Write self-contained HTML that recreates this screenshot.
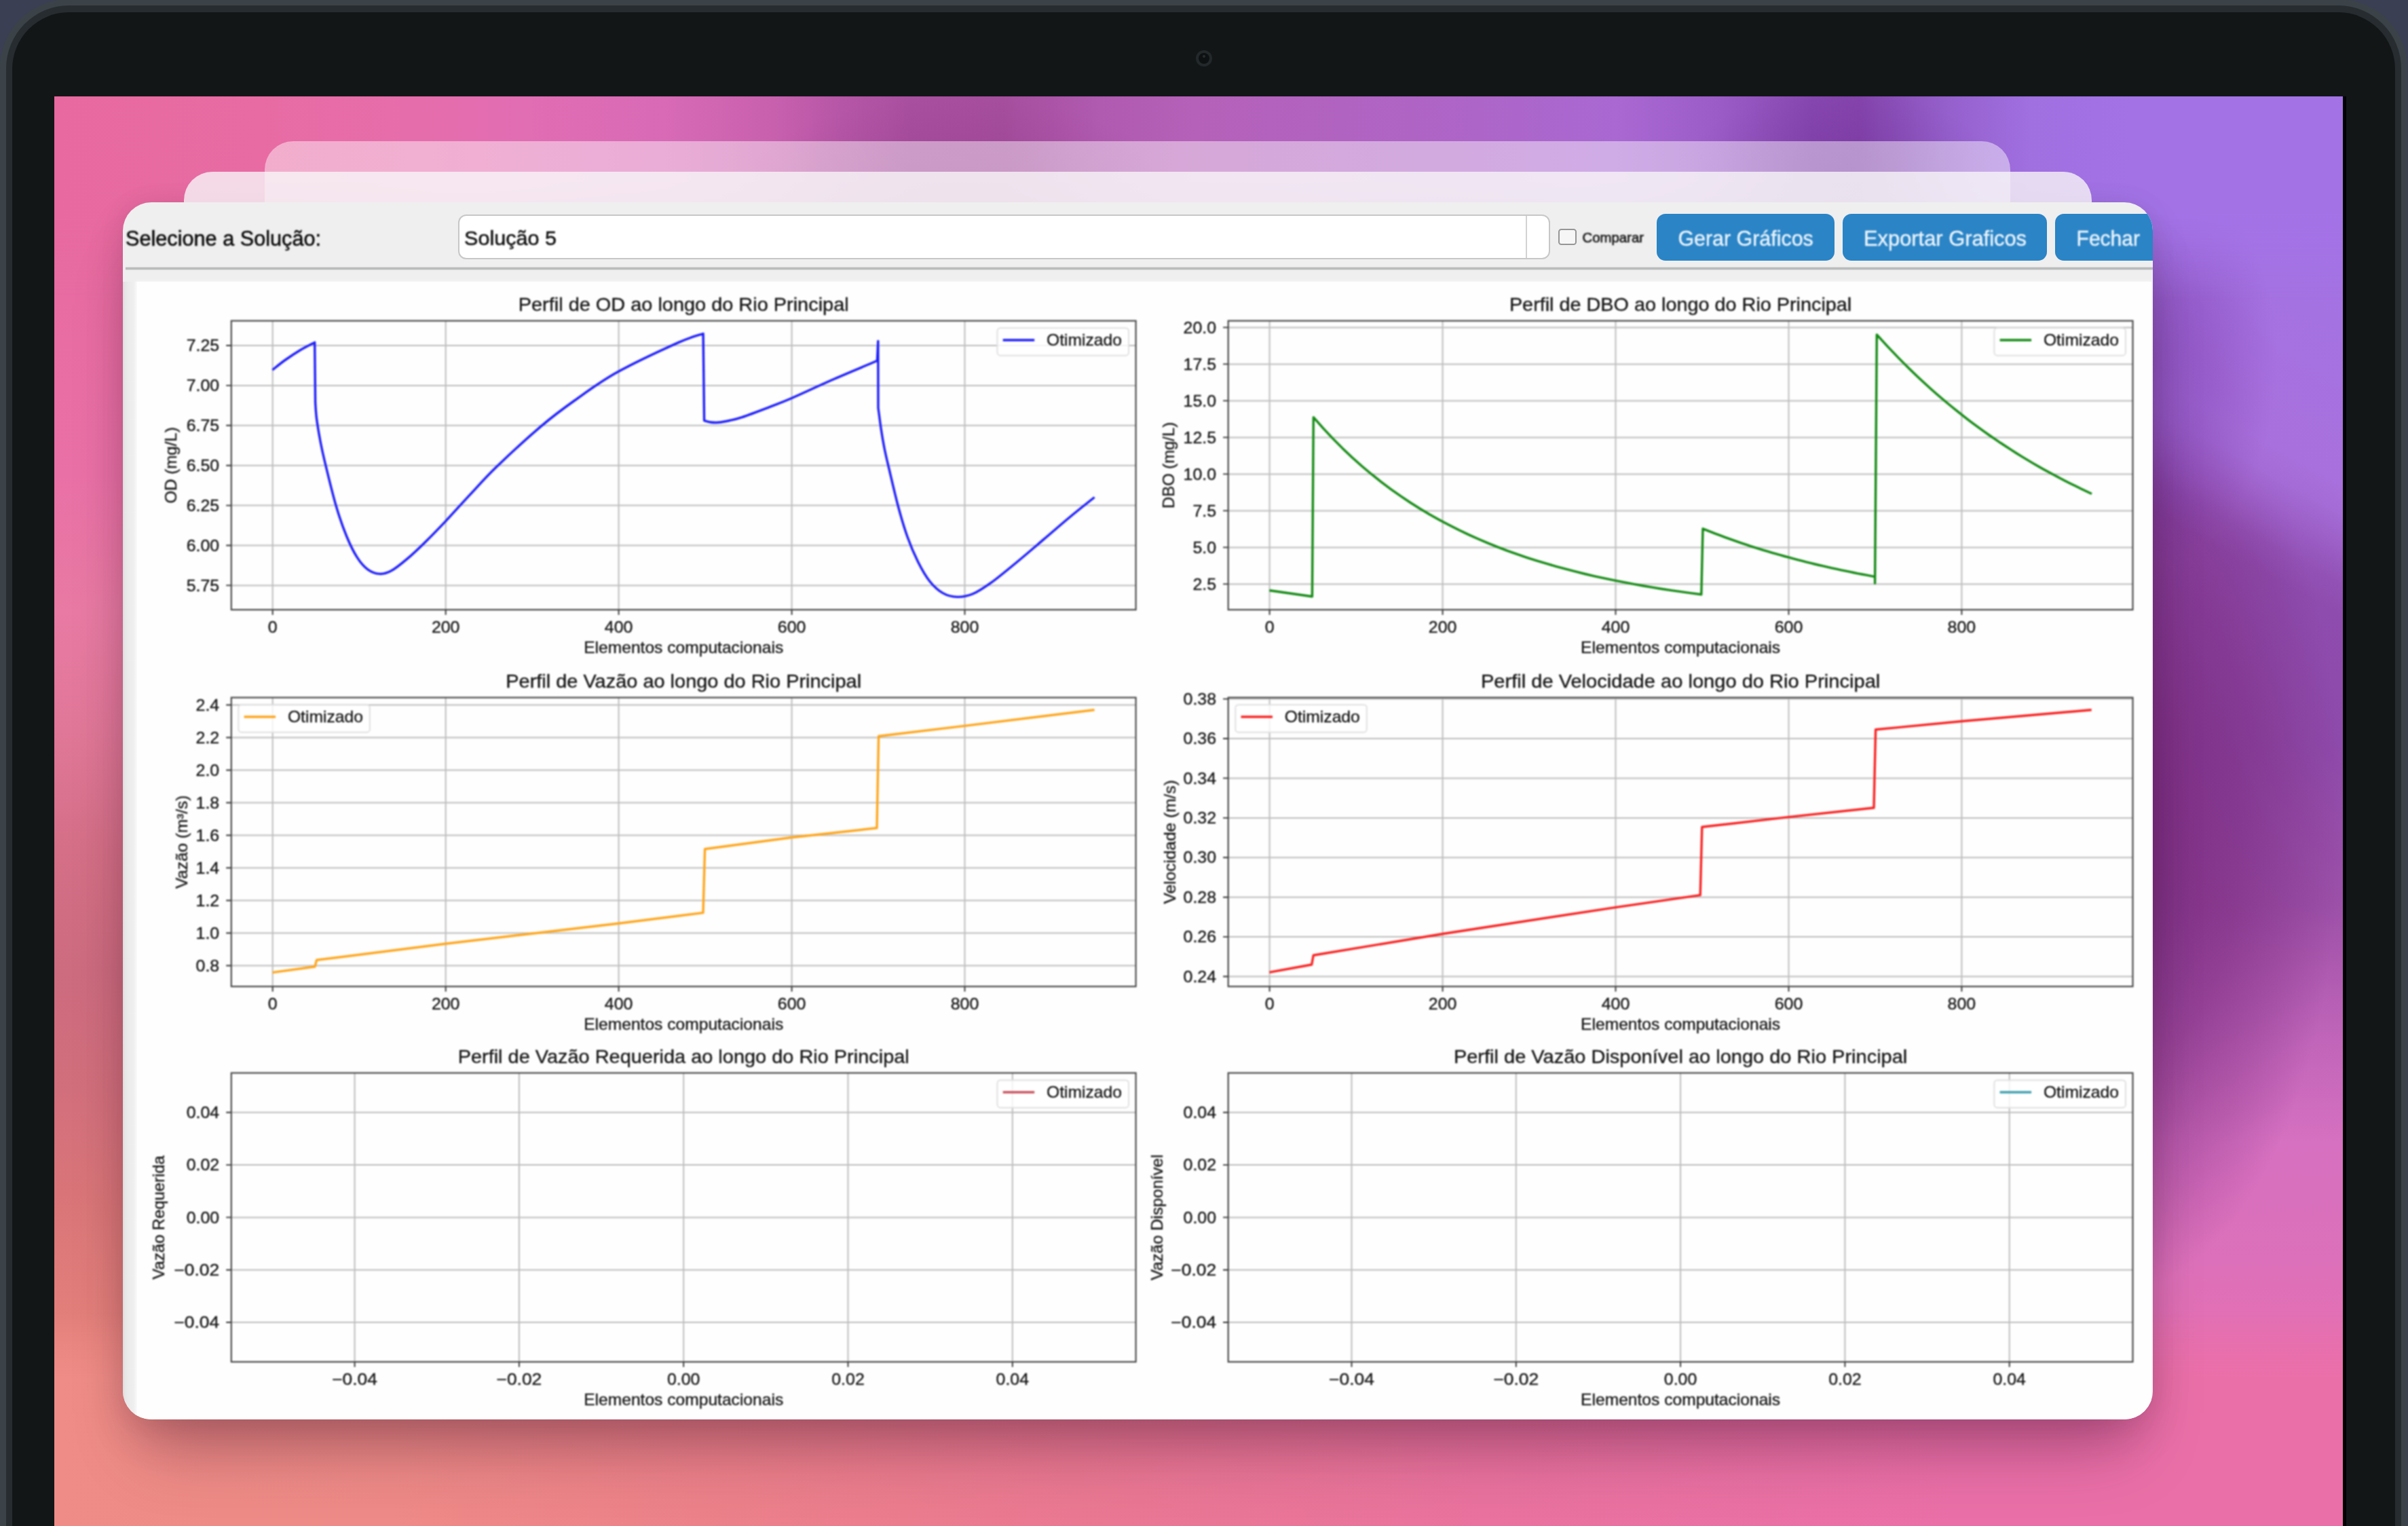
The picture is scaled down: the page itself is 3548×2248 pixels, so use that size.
<!DOCTYPE html>
<html><head><meta charset="utf-8"><title>Perfis</title>
<style>
html,body{margin:0;padding:0}
body{width:3548px;height:2248px;overflow:hidden;position:relative;background:#3a3f53;font-family:"Liberation Sans",sans-serif}
.abs{position:absolute}
#f1{left:0;top:-1px;width:3547px;height:2500px;border-radius:101px;background:#3b4348}
#f2{left:8.6px;top:8.4px;width:3529.6px;height:2500px;border-radius:93px;background:#272c30}
#f3{left:17.5px;top:17.7px;width:3511.3px;height:2500px;border-radius:84px;background:#121617}
#blk{left:3452px;top:141.5px;width:4.6px;height:2200px;background:#020004}
#cam{left:1762px;top:74px;width:16px;height:16px;border:4px solid #23292b;border-radius:50%;background:#0e1112}
#cam i{position:absolute;left:6.3px;top:3.3px;width:3.4px;height:3.4px;border-radius:50%;background:#262c2e}
#screen{left:79.7px;top:141.5px;width:3372.3px;height:2106.5px;overflow:hidden;background:#e86ca2}
/* wallpaper strips (coordinates local to #screen) */
#wl{left:0;top:0;width:400px;height:2107px;background:linear-gradient(180deg,#e7699f 0,#e86ca2 300px,#e970a6 560px,#e87aa3 760px,#e07798 935px,#d46f87 1110px,#cd6b7f 1290px,#d26f7c 1465px,#da7678 1640px,#e4807b 1820px,#eb8882 1950px,#ef8d87 2085px)}
#wr{left:2900px;top:0;width:472px;height:2107px;background:radial-gradient(ellipse 190px 300px at 185px 390px,rgba(105,40,150,.42) 0,rgba(105,40,150,.25) 50%,rgba(105,40,150,0) 100%),linear-gradient(209deg,#a373e6 0,#a572e2 300px,#a870dc 500px,rgba(168,112,220,.85) 540px,rgba(168,112,220,.5) 585px,rgba(168,112,220,.15) 630px,rgba(168,112,220,0) 670px),radial-gradient(ellipse 330px 700px at 140px 1060px,rgba(124,44,128,1) 0,rgba(124,44,128,.9) 18%,rgba(124,44,128,.6) 55%,rgba(124,44,128,.28) 80%,rgba(124,44,128,0) 100%),linear-gradient(180deg,#9250b4 0,#8e4cae 760px,#8e4aaa 958px,#9c50a8 1190px,#c266ba 1400px,#d670c0 1540px,#dc70ba 1710px,#e670b2 1860px,#ea70aa 2070px,#ea6fa8 2107px)}
#wt{left:0;top:0;width:3372px;height:300px;background:radial-gradient(ellipse 230px 120px at 2630px 110px,rgba(100,35,140,.28) 0,rgba(100,35,140,0) 100%),radial-gradient(ellipse 330px 150px at 1330px 150px,rgba(120,30,110,.22) 0,rgba(120,30,110,0) 100%),linear-gradient(90deg,#e7699f 0,#e86ba3 300px,#e66dab 520px,#e16db3 700px,#d86ab6 900px,#c860ae 1060px,#b656a6 1160px,#a94fa0 1260px,#a64e9e 1400px,#b05ab0 1540px,#b561b9 1680px,#b163c1 1900px,#ad65c8 2100px,#a968d2 2300px,#9c5cc8 2450px,#8747b0 2590px,#8444ac 2660px,#9560cc 2790px,#a06fe0 2910px,#a373e6 3060px,#a373e6 3372px);-webkit-mask-image:linear-gradient(180deg,#000 0,#000 170px,transparent 300px);mask-image:linear-gradient(180deg,#000 0,#000 170px,transparent 300px)}
#wb{left:0;top:1790px;width:3372px;height:317px;background:linear-gradient(90deg,#ef8c87 0,#ee8a87 500px,#ec808a 1000px,#ea7892 1500px,#e9729e 2100px,#ea6fa8 2800px,#ea6fa9 3372px);-webkit-mask-image:linear-gradient(180deg,transparent 0,#000 100px);mask-image:linear-gradient(180deg,transparent 0,#000 100px)}
.bw{border-radius:42px 42px 0 0;filter:blur(.6px)}
#w3{left:390px;top:208px;width:2572px;height:120px;background:rgba(255,255,255,.45)}
#w2{left:271px;top:253px;width:2811px;height:100px;background:rgba(247,245,247,.8)}
#win{left:181px;top:297.5px;width:2991px;height:1793px;border-radius:42px;background:#efefef;overflow:hidden;filter:blur(.7px)}
#shadow{left:181px;top:297.5px;width:2991px;height:1793px;border-radius:42px;box-shadow:0 70px 100px -30px rgba(40,0,30,.28),0 25px 60px rgba(40,0,30,.12),0 0 40px rgba(40,0,30,.06)}
#sep{left:4px;top:96px;width:2991px;height:3px;background:#b9bcbc;box-shadow:0 1px 1px #d9dada,0 -1px 1px #dcdcdc}
#canvas{left:20.5px;top:117px;width:2968px;height:1700px;background:#fefefe;box-shadow:0 0 4px 1px #f6f6f6}
#lstrip{left:0;top:117px;width:21px;height:1700px;background:linear-gradient(90deg,#d9dbdb 0,#e5e6e6 3px,#ebebeb 8px,#efefef 16px,#f8f8f8 20px,#fefefe 22px)}
#combo{left:493.5px;top:18.5px;width:1605px;height:62px;border:2.5px solid #c7c7c7;border-radius:12px;background:#fff}
#combo i{position:absolute;right:32px;top:0;width:2px;height:62px;background:#d2d2d2}
#chk{left:2114.5px;top:39px;width:23px;height:20px;border:2.5px solid #969696;border-radius:4.5px;background:#f6f6f6}
.btn{top:17px;height:69px;border-radius:13px;background:#2a84c6}
#svg{left:0;top:0;filter:blur(.95px)}
</style></head>
<body>
<div id="f1" class="abs"></div><div id="f2" class="abs"></div><div id="f3" class="abs"></div>
<div id="cam" class="abs"><i></i></div>
<div id="blk" class="abs"></div>
<div id="screen" class="abs">
  <div id="wl" class="abs"></div><div id="wr" class="abs"></div><div id="wt" class="abs"></div><div id="wb" class="abs"></div>
</div>
<div id="shadow" class="abs"></div>
<div id="w3" class="abs bw"></div>
<div id="w2" class="abs bw"></div>
<div id="win" class="abs">
  <div id="sep" class="abs"></div>
  <div id="canvas" class="abs"></div>
  <div id="lstrip" class="abs"></div>
  <div id="combo" class="abs"><i></i></div>
  <div id="chk" class="abs"></div>
  <div class="abs btn" style="left:2259.5px;width:262.5px"></div>
  <div class="abs btn" style="left:2534px;width:301px"></div>
  <div class="abs btn" style="left:2846.7px;width:200px"></div>
</div>
<svg id="svg" class="abs" width="3548" height="2248" viewBox="0 0 3548 2248" font-family="Liberation Sans, sans-serif">
<g id="tb">
<text x="185" y="362" font-size="30.7" fill="#0a0a0a" stroke="#0a0a0a" stroke-width=".55" textLength="288" lengthAdjust="spacingAndGlyphs">Selecione a Solução:</text>
<text x="684" y="361" font-size="30.4" fill="#101010" stroke="#101010" stroke-width=".55" textLength="136" lengthAdjust="spacingAndGlyphs">Solução 5</text>
<text x="2331.5" y="357" font-size="20.6" fill="#1c1c1c" stroke="#1c1c1c" stroke-width=".7" textLength="90.5" lengthAdjust="spacingAndGlyphs">Comparar</text>
<text x="2472.4" y="362" font-size="32" fill="#eef6fc" stroke="#eef6fc" stroke-width=".4" textLength="199.4" lengthAdjust="spacingAndGlyphs">Gerar Gráficos</text>
<text x="2746" y="362" font-size="32" fill="#eef6fc" stroke="#eef6fc" stroke-width=".4" textLength="240" lengthAdjust="spacingAndGlyphs">Exportar Graficos</text>
<text x="3059.6" y="362" font-size="32" fill="#eef6fc" stroke="#eef6fc" stroke-width=".4" textLength="93.4" lengthAdjust="spacingAndGlyphs">Fechar</text>
</g>
<g id="charts">
<path d="M401.7,472.6V898.2M656.7,472.6V898.2M911.6,472.6V898.2M1166.6,472.6V898.2M1421.5,472.6V898.2M340.8,509.0H1673.6M340.8,567.9H1673.6M340.8,626.8H1673.6M340.8,685.7H1673.6M340.8,744.6H1673.6M340.8,803.5H1673.6M340.8,862.4H1673.6" stroke="#bdbdbd" stroke-width="2" fill="none"/>
<path d="M401.4,545.0C404.5,542.6 413.2,535.3 420.0,530.5C426.8,525.7 434.7,520.4 442.0,516.0C449.3,511.6 460.1,506.3 463.7,504.4L464.6,593.0C464.9,596.9 465.3,607.0 466.5,616.5C467.7,626.0 469.8,638.4 472.0,650.0C474.2,661.6 476.1,670.1 480.0,686.1C483.9,702.1 490.2,728.6 495.4,746.0C500.5,763.4 505.7,777.9 510.9,790.5C516.1,803.1 521.2,813.4 526.4,821.4C531.5,829.4 536.3,834.8 541.8,838.8C547.3,842.8 553.4,845.1 559.2,845.4C565.0,845.7 569.8,844.5 576.6,840.8C583.4,837.1 591.4,830.5 599.8,823.4C608.2,816.3 617.4,807.6 626.9,798.2C636.4,788.9 646.0,778.9 657.0,767.3C668.0,755.7 680.2,741.8 692.6,728.6C705.0,715.4 713.9,704.8 731.3,688.0C748.7,671.2 777.7,644.5 797.0,628.1C816.3,611.7 828.5,602.8 847.3,589.5C866.1,576.2 884.4,562.3 909.9,548.1C935.4,533.9 979.0,513.8 1000.0,504.4C1021.0,495.0 1030.1,493.7 1036.1,491.6L1037.6,619.6C1039.2,620.0 1043.5,621.5 1047.0,622.0C1050.5,622.5 1053.8,622.7 1058.5,622.3C1063.2,621.9 1069.2,620.8 1075.0,619.5C1080.8,618.2 1083.8,617.8 1093.3,614.6C1102.8,611.4 1119.9,604.9 1132.0,600.3C1144.1,595.6 1149.9,593.7 1166.0,586.7C1182.1,579.7 1207.5,567.7 1228.6,558.5C1249.7,549.3 1281.8,536.0 1292.4,531.5L1293.8,502.5L1294.0,601.0C1294.7,606.2 1296.7,622.2 1298.2,632.0C1299.7,641.8 1301.1,650.3 1303.0,660.0C1304.9,669.7 1306.4,675.7 1309.8,690.0C1313.2,704.3 1318.9,729.2 1323.4,746.0C1327.9,762.8 1332.1,777.0 1336.9,790.5C1341.7,804.0 1346.9,816.2 1352.4,827.2C1357.9,838.2 1363.7,848.5 1369.8,856.2C1375.9,863.9 1382.3,869.7 1389.1,873.6C1395.9,877.5 1403.0,879.2 1410.4,879.4C1417.8,879.6 1425.2,878.3 1433.6,874.8C1442.0,871.3 1449.6,866.1 1460.6,858.2C1471.5,850.3 1486.4,837.8 1499.3,827.2C1512.2,816.6 1525.1,805.4 1538.0,794.4C1550.9,783.4 1564.2,771.8 1576.6,761.5C1589.0,751.2 1606.6,737.3 1612.6,732.5" stroke="#1c1cfa" stroke-width="3.4" fill="none" stroke-linejoin="round" stroke-linecap="butt"/>
<path d="M401.7,898.2v7.6M656.7,898.2v7.6M911.6,898.2v7.6M1166.6,898.2v7.6M1421.5,898.2v7.6M340.8,509.0h-7.6M340.8,567.9h-7.6M340.8,626.8h-7.6M340.8,685.7h-7.6M340.8,744.6h-7.6M340.8,803.5h-7.6M340.8,862.4h-7.6" stroke="#333" stroke-width="1.9" fill="none"/>
<rect x="340.8" y="472.6" width="1332.8" height="425.6" fill="none" stroke="#424242" stroke-width="2.1"/>
<text x="401.7" y="931.8" font-size="23.2" text-anchor="middle" textLength="13.9" lengthAdjust="spacingAndGlyphs" fill="#161616" stroke="#161616" stroke-width=".35">0</text>
<text x="656.7" y="931.8" font-size="23.2" text-anchor="middle" textLength="41.6" lengthAdjust="spacingAndGlyphs" fill="#161616" stroke="#161616" stroke-width=".35">200</text>
<text x="911.6" y="931.8" font-size="23.2" text-anchor="middle" textLength="41.6" lengthAdjust="spacingAndGlyphs" fill="#161616" stroke="#161616" stroke-width=".35">400</text>
<text x="1166.6" y="931.8" font-size="23.2" text-anchor="middle" textLength="41.6" lengthAdjust="spacingAndGlyphs" fill="#161616" stroke="#161616" stroke-width=".35">600</text>
<text x="1421.5" y="931.8" font-size="23.2" text-anchor="middle" textLength="41.6" lengthAdjust="spacingAndGlyphs" fill="#161616" stroke="#161616" stroke-width=".35">800</text>
<text x="323.2" y="517.1" font-size="23.2" text-anchor="end" textLength="48.5" lengthAdjust="spacingAndGlyphs" fill="#161616" stroke="#161616" stroke-width=".35">7.25</text>
<text x="323.2" y="576.0" font-size="23.2" text-anchor="end" textLength="48.5" lengthAdjust="spacingAndGlyphs" fill="#161616" stroke="#161616" stroke-width=".35">7.00</text>
<text x="323.2" y="634.9" font-size="23.2" text-anchor="end" textLength="48.5" lengthAdjust="spacingAndGlyphs" fill="#161616" stroke="#161616" stroke-width=".35">6.75</text>
<text x="323.2" y="693.8" font-size="23.2" text-anchor="end" textLength="48.5" lengthAdjust="spacingAndGlyphs" fill="#161616" stroke="#161616" stroke-width=".35">6.50</text>
<text x="323.2" y="752.7" font-size="23.2" text-anchor="end" textLength="48.5" lengthAdjust="spacingAndGlyphs" fill="#161616" stroke="#161616" stroke-width=".35">6.25</text>
<text x="323.2" y="811.6" font-size="23.2" text-anchor="end" textLength="48.5" lengthAdjust="spacingAndGlyphs" fill="#161616" stroke="#161616" stroke-width=".35">6.00</text>
<text x="323.2" y="870.5" font-size="23.2" text-anchor="end" textLength="48.5" lengthAdjust="spacingAndGlyphs" fill="#161616" stroke="#161616" stroke-width=".35">5.75</text>
<text x="1007.2" y="962.0" font-size="23.2" text-anchor="middle" textLength="294.0" lengthAdjust="spacingAndGlyphs" fill="#161616" stroke="#161616" stroke-width=".35">Elementos computacionais</text>
<text x="259.9" y="685.4" font-size="23.2" text-anchor="middle" textLength="112.4" lengthAdjust="spacingAndGlyphs" fill="#161616" stroke="#161616" stroke-width=".35" transform="rotate(-90 259.9 685.4)">OD (mg/L)</text>
<text x="1007.2" y="457.6" font-size="27.8" text-anchor="middle" textLength="486.9" lengthAdjust="spacingAndGlyphs" fill="#161616" stroke="#161616" stroke-width=".35">Perfil de OD ao longo do Rio Principal</text>
<rect x="1469.5" y="483.2" width="193.5" height="40.5" rx="4.5" fill="#fff" fill-opacity="0.8" stroke="#e0e0e0" stroke-width="2"/>
<path d="M1477.7,501.0h46.5" stroke="#1c1cfa" stroke-width="3.6"/>
<text x="1542.0" y="508.5" font-size="23.2" text-anchor="start" textLength="111.0" lengthAdjust="spacingAndGlyphs" fill="#161616" stroke="#161616" stroke-width=".35">Otimizado</text>
<path d="M1870.6,472.6V898.2M2125.6,472.6V898.2M2380.5,472.6V898.2M2635.5,472.6V898.2M2890.4,472.6V898.2M1809.7,482.4H3142.5M1809.7,536.4H3142.5M1809.7,590.4H3142.5M1809.7,644.4H3142.5M1809.7,698.4H3142.5M1809.7,752.4H3142.5M1809.7,806.4H3142.5M1809.7,860.4H3142.5" stroke="#bdbdbd" stroke-width="2" fill="none"/>
<path d="M1870.3,869.8L1933.4,878.7L1935.3,614.7L1949.6,630.9L1963.9,646.1L1978.1,660.4L1992.4,673.9L2006.7,686.7L2021.0,698.7L2035.3,710.1L2049.6,720.8L2063.9,730.9L2078.2,740.5L2092.5,749.5L2106.7,758.0L2121.0,766.0L2135.3,773.6L2149.6,780.8L2163.9,787.6L2178.2,794.0L2192.5,800.1L2206.8,805.8L2221.0,811.3L2235.3,816.4L2249.6,821.3L2263.9,825.9L2278.2,830.2L2292.5,834.3L2306.8,838.2L2321.1,841.9L2335.4,845.5L2349.6,848.8L2363.9,851.9L2378.2,854.9L2392.5,857.7L2406.8,860.4L2421.1,863.0L2435.4,865.4L2449.7,867.7L2463.9,869.9L2478.2,871.9L2492.5,873.9L2506.8,875.7L2509.0,778.8L2515.3,781.4L2521.7,783.9L2528.0,786.3L2534.3,788.7L2540.7,791.1L2547.0,793.4L2553.4,795.7L2559.7,797.9L2566.1,800.1L2572.4,802.2L2578.7,804.3L2585.1,806.3L2591.4,808.3L2597.8,810.3L2604.1,812.2L2610.4,814.1L2616.8,815.9L2623.1,817.7L2629.5,819.5L2635.8,821.2L2642.2,822.9L2648.5,824.6L2654.8,826.2L2661.2,827.9L2667.5,829.4L2673.9,831.0L2680.2,832.5L2686.5,833.9L2692.9,835.4L2699.2,836.8L2705.6,838.2L2711.9,839.6L2718.3,840.9L2724.6,842.2L2730.9,843.5L2737.3,844.8L2743.6,846.0L2750.0,847.2L2756.3,848.4L2762.6,849.6L2762.6,859.3L2765.3,493.0L2773.2,501.7L2781.2,510.3L2789.1,518.7L2797.0,526.9L2804.9,534.9L2812.8,542.8L2820.8,550.5L2828.7,557.9L2836.6,565.3L2844.5,572.4L2852.4,579.4L2860.3,586.3L2868.3,593.0L2876.2,599.5L2884.1,605.9L2892.0,612.2L2899.9,618.3L2907.9,624.3L2915.8,630.1L2923.7,635.9L2931.6,641.5L2939.5,646.9L2947.4,652.3L2955.4,657.5L2963.3,662.7L2971.2,667.7L2979.1,672.6L2987.0,677.4L2994.9,682.1L3002.9,686.7L3010.8,691.2L3018.7,695.5L3026.6,699.8L3034.5,704.1L3042.5,708.2L3050.4,712.2L3058.3,716.1L3066.2,720.0L3074.1,723.8L3082.0,727.5" stroke="#128a12" stroke-width="3.4" fill="none" stroke-linejoin="round" stroke-linecap="butt"/>
<path d="M1870.6,898.2v7.6M2125.6,898.2v7.6M2380.5,898.2v7.6M2635.5,898.2v7.6M2890.4,898.2v7.6M1809.7,482.4h-7.6M1809.7,536.4h-7.6M1809.7,590.4h-7.6M1809.7,644.4h-7.6M1809.7,698.4h-7.6M1809.7,752.4h-7.6M1809.7,806.4h-7.6M1809.7,860.4h-7.6" stroke="#333" stroke-width="1.9" fill="none"/>
<rect x="1809.7" y="472.6" width="1332.8" height="425.6" fill="none" stroke="#424242" stroke-width="2.1"/>
<text x="1870.6" y="931.8" font-size="23.2" text-anchor="middle" textLength="13.9" lengthAdjust="spacingAndGlyphs" fill="#161616" stroke="#161616" stroke-width=".35">0</text>
<text x="2125.6" y="931.8" font-size="23.2" text-anchor="middle" textLength="41.6" lengthAdjust="spacingAndGlyphs" fill="#161616" stroke="#161616" stroke-width=".35">200</text>
<text x="2380.5" y="931.8" font-size="23.2" text-anchor="middle" textLength="41.6" lengthAdjust="spacingAndGlyphs" fill="#161616" stroke="#161616" stroke-width=".35">400</text>
<text x="2635.5" y="931.8" font-size="23.2" text-anchor="middle" textLength="41.6" lengthAdjust="spacingAndGlyphs" fill="#161616" stroke="#161616" stroke-width=".35">600</text>
<text x="2890.4" y="931.8" font-size="23.2" text-anchor="middle" textLength="41.6" lengthAdjust="spacingAndGlyphs" fill="#161616" stroke="#161616" stroke-width=".35">800</text>
<text x="1792.1" y="490.5" font-size="23.2" text-anchor="end" textLength="48.5" lengthAdjust="spacingAndGlyphs" fill="#161616" stroke="#161616" stroke-width=".35">20.0</text>
<text x="1792.1" y="544.5" font-size="23.2" text-anchor="end" textLength="48.5" lengthAdjust="spacingAndGlyphs" fill="#161616" stroke="#161616" stroke-width=".35">17.5</text>
<text x="1792.1" y="598.5" font-size="23.2" text-anchor="end" textLength="48.5" lengthAdjust="spacingAndGlyphs" fill="#161616" stroke="#161616" stroke-width=".35">15.0</text>
<text x="1792.1" y="652.5" font-size="23.2" text-anchor="end" textLength="48.5" lengthAdjust="spacingAndGlyphs" fill="#161616" stroke="#161616" stroke-width=".35">12.5</text>
<text x="1792.1" y="706.5" font-size="23.2" text-anchor="end" textLength="48.5" lengthAdjust="spacingAndGlyphs" fill="#161616" stroke="#161616" stroke-width=".35">10.0</text>
<text x="1792.1" y="760.5" font-size="23.2" text-anchor="end" textLength="34.7" lengthAdjust="spacingAndGlyphs" fill="#161616" stroke="#161616" stroke-width=".35">7.5</text>
<text x="1792.1" y="814.5" font-size="23.2" text-anchor="end" textLength="34.7" lengthAdjust="spacingAndGlyphs" fill="#161616" stroke="#161616" stroke-width=".35">5.0</text>
<text x="1792.1" y="868.5" font-size="23.2" text-anchor="end" textLength="34.7" lengthAdjust="spacingAndGlyphs" fill="#161616" stroke="#161616" stroke-width=".35">2.5</text>
<text x="2476.1" y="962.0" font-size="23.2" text-anchor="middle" textLength="294.0" lengthAdjust="spacingAndGlyphs" fill="#161616" stroke="#161616" stroke-width=".35">Elementos computacionais</text>
<text x="1729.8" y="685.4" font-size="23.2" text-anchor="middle" textLength="127.0" lengthAdjust="spacingAndGlyphs" fill="#161616" stroke="#161616" stroke-width=".35" transform="rotate(-90 1729.8 685.4)">DBO (mg/L)</text>
<text x="2476.1" y="457.6" font-size="27.8" text-anchor="middle" textLength="504.4" lengthAdjust="spacingAndGlyphs" fill="#161616" stroke="#161616" stroke-width=".35">Perfil de DBO ao longo do Rio Principal</text>
<rect x="2938.4" y="483.2" width="193.5" height="40.5" rx="4.5" fill="#fff" fill-opacity="0.8" stroke="#e0e0e0" stroke-width="2"/>
<path d="M2946.6,501.0h46.5" stroke="#128a12" stroke-width="3.6"/>
<text x="3010.9" y="508.5" font-size="23.2" text-anchor="start" textLength="111.0" lengthAdjust="spacingAndGlyphs" fill="#161616" stroke="#161616" stroke-width=".35">Otimizado</text>
<path d="M401.7,1027.6V1453.2M656.7,1027.6V1453.2M911.6,1027.6V1453.2M1166.6,1027.6V1453.2M1421.5,1027.6V1453.2M340.8,1038.5H1673.6M340.8,1086.5H1673.6M340.8,1134.5H1673.6M340.8,1182.5H1673.6M340.8,1230.5H1673.6M340.8,1278.5H1673.6M340.8,1326.5H1673.6M340.8,1374.5H1673.6M340.8,1422.5H1673.6" stroke="#bdbdbd" stroke-width="2" fill="none"/>
<path d="M401.4,1432.6L464.0,1424.0L466.5,1414.3L656.7,1390.3L912.0,1360.2L1036.0,1344.6L1038.6,1250.8L1166.0,1233.7L1292.0,1219.8L1294.6,1084.5L1420.8,1069.4L1612.6,1045.8" stroke="#ffa51a" stroke-width="3.4" fill="none" stroke-linejoin="round" stroke-linecap="butt"/>
<path d="M401.7,1453.2v7.6M656.7,1453.2v7.6M911.6,1453.2v7.6M1166.6,1453.2v7.6M1421.5,1453.2v7.6M340.8,1038.5h-7.6M340.8,1086.5h-7.6M340.8,1134.5h-7.6M340.8,1182.5h-7.6M340.8,1230.5h-7.6M340.8,1278.5h-7.6M340.8,1326.5h-7.6M340.8,1374.5h-7.6M340.8,1422.5h-7.6" stroke="#333" stroke-width="1.9" fill="none"/>
<rect x="340.8" y="1027.6" width="1332.8" height="425.6" fill="none" stroke="#424242" stroke-width="2.1"/>
<text x="401.7" y="1486.8" font-size="23.2" text-anchor="middle" textLength="13.9" lengthAdjust="spacingAndGlyphs" fill="#161616" stroke="#161616" stroke-width=".35">0</text>
<text x="656.7" y="1486.8" font-size="23.2" text-anchor="middle" textLength="41.6" lengthAdjust="spacingAndGlyphs" fill="#161616" stroke="#161616" stroke-width=".35">200</text>
<text x="911.6" y="1486.8" font-size="23.2" text-anchor="middle" textLength="41.6" lengthAdjust="spacingAndGlyphs" fill="#161616" stroke="#161616" stroke-width=".35">400</text>
<text x="1166.6" y="1486.8" font-size="23.2" text-anchor="middle" textLength="41.6" lengthAdjust="spacingAndGlyphs" fill="#161616" stroke="#161616" stroke-width=".35">600</text>
<text x="1421.5" y="1486.8" font-size="23.2" text-anchor="middle" textLength="41.6" lengthAdjust="spacingAndGlyphs" fill="#161616" stroke="#161616" stroke-width=".35">800</text>
<text x="323.2" y="1046.6" font-size="23.2" text-anchor="end" textLength="34.7" lengthAdjust="spacingAndGlyphs" fill="#161616" stroke="#161616" stroke-width=".35">2.4</text>
<text x="323.2" y="1094.6" font-size="23.2" text-anchor="end" textLength="34.7" lengthAdjust="spacingAndGlyphs" fill="#161616" stroke="#161616" stroke-width=".35">2.2</text>
<text x="323.2" y="1142.6" font-size="23.2" text-anchor="end" textLength="34.7" lengthAdjust="spacingAndGlyphs" fill="#161616" stroke="#161616" stroke-width=".35">2.0</text>
<text x="323.2" y="1190.6" font-size="23.2" text-anchor="end" textLength="34.7" lengthAdjust="spacingAndGlyphs" fill="#161616" stroke="#161616" stroke-width=".35">1.8</text>
<text x="323.2" y="1238.6" font-size="23.2" text-anchor="end" textLength="34.7" lengthAdjust="spacingAndGlyphs" fill="#161616" stroke="#161616" stroke-width=".35">1.6</text>
<text x="323.2" y="1286.6" font-size="23.2" text-anchor="end" textLength="34.7" lengthAdjust="spacingAndGlyphs" fill="#161616" stroke="#161616" stroke-width=".35">1.4</text>
<text x="323.2" y="1334.6" font-size="23.2" text-anchor="end" textLength="34.7" lengthAdjust="spacingAndGlyphs" fill="#161616" stroke="#161616" stroke-width=".35">1.2</text>
<text x="323.2" y="1382.6" font-size="23.2" text-anchor="end" textLength="34.7" lengthAdjust="spacingAndGlyphs" fill="#161616" stroke="#161616" stroke-width=".35">1.0</text>
<text x="323.2" y="1430.6" font-size="23.2" text-anchor="end" textLength="34.7" lengthAdjust="spacingAndGlyphs" fill="#161616" stroke="#161616" stroke-width=".35">0.8</text>
<text x="1007.2" y="1517.0" font-size="23.2" text-anchor="middle" textLength="294.0" lengthAdjust="spacingAndGlyphs" fill="#161616" stroke="#161616" stroke-width=".35">Elementos computacionais</text>
<text x="276.5" y="1240.4" font-size="23.2" text-anchor="middle" textLength="137.3" lengthAdjust="spacingAndGlyphs" fill="#161616" stroke="#161616" stroke-width=".35" transform="rotate(-90 276.5 1240.4)">Vazão (m³/s)</text>
<text x="1007.2" y="1012.6" font-size="27.8" text-anchor="middle" textLength="523.8" lengthAdjust="spacingAndGlyphs" fill="#161616" stroke="#161616" stroke-width=".35">Perfil de Vazão ao longo do Rio Principal</text>
<rect x="351.4" y="1038.2" width="193.5" height="40.5" rx="4.5" fill="#fff" fill-opacity="0.8" stroke="#e0e0e0" stroke-width="2"/>
<path d="M359.6,1056.0h46.5" stroke="#ffa51a" stroke-width="3.6"/>
<text x="423.9" y="1063.5" font-size="23.2" text-anchor="start" textLength="111.0" lengthAdjust="spacingAndGlyphs" fill="#161616" stroke="#161616" stroke-width=".35">Otimizado</text>
<path d="M1870.6,1027.6V1453.2M2125.6,1027.6V1453.2M2380.5,1027.6V1453.2M2635.5,1027.6V1453.2M2890.4,1027.6V1453.2M1809.7,1029.6H3142.5M1809.7,1088.0H3142.5M1809.7,1146.4H3142.5M1809.7,1204.9H3142.5M1809.7,1263.3H3142.5M1809.7,1321.7H3142.5M1809.7,1380.1H3142.5M1809.7,1438.5H3142.5" stroke="#bdbdbd" stroke-width="2" fill="none"/>
<path d="M1870.3,1432.4L1932.7,1421.0L1935.2,1407.3L2125.4,1375.7L2380.7,1336.6L2505.2,1318.6L2507.8,1218.3L2635.2,1203.6L2761.0,1190.0L2763.6,1074.8L2890.4,1062.5L3081.7,1045.8" stroke="#fa2020" stroke-width="3.4" fill="none" stroke-linejoin="round" stroke-linecap="butt"/>
<path d="M1870.6,1453.2v7.6M2125.6,1453.2v7.6M2380.5,1453.2v7.6M2635.5,1453.2v7.6M2890.4,1453.2v7.6M1809.7,1029.6h-7.6M1809.7,1088.0h-7.6M1809.7,1146.4h-7.6M1809.7,1204.9h-7.6M1809.7,1263.3h-7.6M1809.7,1321.7h-7.6M1809.7,1380.1h-7.6M1809.7,1438.5h-7.6" stroke="#333" stroke-width="1.9" fill="none"/>
<rect x="1809.7" y="1027.6" width="1332.8" height="425.6" fill="none" stroke="#424242" stroke-width="2.1"/>
<text x="1870.6" y="1486.8" font-size="23.2" text-anchor="middle" textLength="13.9" lengthAdjust="spacingAndGlyphs" fill="#161616" stroke="#161616" stroke-width=".35">0</text>
<text x="2125.6" y="1486.8" font-size="23.2" text-anchor="middle" textLength="41.6" lengthAdjust="spacingAndGlyphs" fill="#161616" stroke="#161616" stroke-width=".35">200</text>
<text x="2380.5" y="1486.8" font-size="23.2" text-anchor="middle" textLength="41.6" lengthAdjust="spacingAndGlyphs" fill="#161616" stroke="#161616" stroke-width=".35">400</text>
<text x="2635.5" y="1486.8" font-size="23.2" text-anchor="middle" textLength="41.6" lengthAdjust="spacingAndGlyphs" fill="#161616" stroke="#161616" stroke-width=".35">600</text>
<text x="2890.4" y="1486.8" font-size="23.2" text-anchor="middle" textLength="41.6" lengthAdjust="spacingAndGlyphs" fill="#161616" stroke="#161616" stroke-width=".35">800</text>
<text x="1792.1" y="1037.7" font-size="23.2" text-anchor="end" textLength="48.5" lengthAdjust="spacingAndGlyphs" fill="#161616" stroke="#161616" stroke-width=".35">0.38</text>
<text x="1792.1" y="1096.1" font-size="23.2" text-anchor="end" textLength="48.5" lengthAdjust="spacingAndGlyphs" fill="#161616" stroke="#161616" stroke-width=".35">0.36</text>
<text x="1792.1" y="1154.5" font-size="23.2" text-anchor="end" textLength="48.5" lengthAdjust="spacingAndGlyphs" fill="#161616" stroke="#161616" stroke-width=".35">0.34</text>
<text x="1792.1" y="1213.0" font-size="23.2" text-anchor="end" textLength="48.5" lengthAdjust="spacingAndGlyphs" fill="#161616" stroke="#161616" stroke-width=".35">0.32</text>
<text x="1792.1" y="1271.4" font-size="23.2" text-anchor="end" textLength="48.5" lengthAdjust="spacingAndGlyphs" fill="#161616" stroke="#161616" stroke-width=".35">0.30</text>
<text x="1792.1" y="1329.8" font-size="23.2" text-anchor="end" textLength="48.5" lengthAdjust="spacingAndGlyphs" fill="#161616" stroke="#161616" stroke-width=".35">0.28</text>
<text x="1792.1" y="1388.2" font-size="23.2" text-anchor="end" textLength="48.5" lengthAdjust="spacingAndGlyphs" fill="#161616" stroke="#161616" stroke-width=".35">0.26</text>
<text x="1792.1" y="1446.6" font-size="23.2" text-anchor="end" textLength="48.5" lengthAdjust="spacingAndGlyphs" fill="#161616" stroke="#161616" stroke-width=".35">0.24</text>
<text x="2476.1" y="1517.0" font-size="23.2" text-anchor="middle" textLength="294.0" lengthAdjust="spacingAndGlyphs" fill="#161616" stroke="#161616" stroke-width=".35">Elementos computacionais</text>
<text x="1731.7" y="1240.4" font-size="23.2" text-anchor="middle" textLength="182.4" lengthAdjust="spacingAndGlyphs" fill="#161616" stroke="#161616" stroke-width=".35" transform="rotate(-90 1731.7 1240.4)">Velocidade (m/s)</text>
<text x="2476.1" y="1012.6" font-size="27.8" text-anchor="middle" textLength="588.4" lengthAdjust="spacingAndGlyphs" fill="#161616" stroke="#161616" stroke-width=".35">Perfil de Velocidade ao longo do Rio Principal</text>
<rect x="1820.3" y="1038.2" width="193.5" height="40.5" rx="4.5" fill="#fff" fill-opacity="0.8" stroke="#e0e0e0" stroke-width="2"/>
<path d="M1828.5,1056.0h46.5" stroke="#fa2020" stroke-width="3.6"/>
<text x="1892.8" y="1063.5" font-size="23.2" text-anchor="start" textLength="111.0" lengthAdjust="spacingAndGlyphs" fill="#161616" stroke="#161616" stroke-width=".35">Otimizado</text>
<path d="M522.6,1580.6V2006.2M764.9,1580.6V2006.2M1007.2,1580.6V2006.2M1249.5,1580.6V2006.2M1491.8,1580.6V2006.2M340.8,1638.8H1673.6M340.8,1716.1H1673.6M340.8,1793.4H1673.6M340.8,1870.7H1673.6M340.8,1948.0H1673.6" stroke="#bdbdbd" stroke-width="2" fill="none"/>
<path d="M522.6,2006.2v7.6M764.9,2006.2v7.6M1007.2,2006.2v7.6M1249.5,2006.2v7.6M1491.8,2006.2v7.6M340.8,1638.8h-7.6M340.8,1716.1h-7.6M340.8,1793.4h-7.6M340.8,1870.7h-7.6M340.8,1948.0h-7.6" stroke="#333" stroke-width="1.9" fill="none"/>
<rect x="340.8" y="1580.6" width="1332.8" height="425.6" fill="none" stroke="#424242" stroke-width="2.1"/>
<text x="522.6" y="2039.8" font-size="23.2" text-anchor="middle" textLength="66.8" lengthAdjust="spacingAndGlyphs" fill="#161616" stroke="#161616" stroke-width=".35">−0.04</text>
<text x="764.9" y="2039.8" font-size="23.2" text-anchor="middle" textLength="66.8" lengthAdjust="spacingAndGlyphs" fill="#161616" stroke="#161616" stroke-width=".35">−0.02</text>
<text x="1007.2" y="2039.8" font-size="23.2" text-anchor="middle" textLength="48.5" lengthAdjust="spacingAndGlyphs" fill="#161616" stroke="#161616" stroke-width=".35">0.00</text>
<text x="1249.5" y="2039.8" font-size="23.2" text-anchor="middle" textLength="48.5" lengthAdjust="spacingAndGlyphs" fill="#161616" stroke="#161616" stroke-width=".35">0.02</text>
<text x="1491.8" y="2039.8" font-size="23.2" text-anchor="middle" textLength="48.5" lengthAdjust="spacingAndGlyphs" fill="#161616" stroke="#161616" stroke-width=".35">0.04</text>
<text x="323.2" y="1646.9" font-size="23.2" text-anchor="end" textLength="48.5" lengthAdjust="spacingAndGlyphs" fill="#161616" stroke="#161616" stroke-width=".35">0.04</text>
<text x="323.2" y="1724.2" font-size="23.2" text-anchor="end" textLength="48.5" lengthAdjust="spacingAndGlyphs" fill="#161616" stroke="#161616" stroke-width=".35">0.02</text>
<text x="323.2" y="1801.5" font-size="23.2" text-anchor="end" textLength="48.5" lengthAdjust="spacingAndGlyphs" fill="#161616" stroke="#161616" stroke-width=".35">0.00</text>
<text x="323.2" y="1878.8" font-size="23.2" text-anchor="end" textLength="66.8" lengthAdjust="spacingAndGlyphs" fill="#161616" stroke="#161616" stroke-width=".35">−0.02</text>
<text x="323.2" y="1956.1" font-size="23.2" text-anchor="end" textLength="66.8" lengthAdjust="spacingAndGlyphs" fill="#161616" stroke="#161616" stroke-width=".35">−0.04</text>
<text x="1007.2" y="2070.0" font-size="23.2" text-anchor="middle" textLength="294.0" lengthAdjust="spacingAndGlyphs" fill="#161616" stroke="#161616" stroke-width=".35">Elementos computacionais</text>
<text x="242.5" y="1793.4" font-size="23.2" text-anchor="middle" textLength="182.5" lengthAdjust="spacingAndGlyphs" fill="#161616" stroke="#161616" stroke-width=".35" transform="rotate(-90 242.5 1793.4)">Vazão Requerida</text>
<text x="1007.2" y="1565.6" font-size="27.8" text-anchor="middle" textLength="665.1" lengthAdjust="spacingAndGlyphs" fill="#161616" stroke="#161616" stroke-width=".35">Perfil de Vazão Requerida ao longo do Rio Principal</text>
<rect x="1469.5" y="1591.2" width="193.5" height="40.5" rx="4.5" fill="#fff" fill-opacity="0.8" stroke="#e0e0e0" stroke-width="2"/>
<path d="M1477.7,1609.0h46.5" stroke="#c9525e" stroke-width="3.6"/>
<text x="1542.0" y="1616.5" font-size="23.2" text-anchor="start" textLength="111.0" lengthAdjust="spacingAndGlyphs" fill="#161616" stroke="#161616" stroke-width=".35">Otimizado</text>
<path d="M1991.5,1580.6V2006.2M2233.8,1580.6V2006.2M2476.1,1580.6V2006.2M2718.4,1580.6V2006.2M2960.7,1580.6V2006.2M1809.7,1638.8H3142.5M1809.7,1716.1H3142.5M1809.7,1793.4H3142.5M1809.7,1870.7H3142.5M1809.7,1948.0H3142.5" stroke="#bdbdbd" stroke-width="2" fill="none"/>
<path d="M1991.5,2006.2v7.6M2233.8,2006.2v7.6M2476.1,2006.2v7.6M2718.4,2006.2v7.6M2960.7,2006.2v7.6M1809.7,1638.8h-7.6M1809.7,1716.1h-7.6M1809.7,1793.4h-7.6M1809.7,1870.7h-7.6M1809.7,1948.0h-7.6" stroke="#333" stroke-width="1.9" fill="none"/>
<rect x="1809.7" y="1580.6" width="1332.8" height="425.6" fill="none" stroke="#424242" stroke-width="2.1"/>
<text x="1991.5" y="2039.8" font-size="23.2" text-anchor="middle" textLength="66.8" lengthAdjust="spacingAndGlyphs" fill="#161616" stroke="#161616" stroke-width=".35">−0.04</text>
<text x="2233.8" y="2039.8" font-size="23.2" text-anchor="middle" textLength="66.8" lengthAdjust="spacingAndGlyphs" fill="#161616" stroke="#161616" stroke-width=".35">−0.02</text>
<text x="2476.1" y="2039.8" font-size="23.2" text-anchor="middle" textLength="48.5" lengthAdjust="spacingAndGlyphs" fill="#161616" stroke="#161616" stroke-width=".35">0.00</text>
<text x="2718.4" y="2039.8" font-size="23.2" text-anchor="middle" textLength="48.5" lengthAdjust="spacingAndGlyphs" fill="#161616" stroke="#161616" stroke-width=".35">0.02</text>
<text x="2960.7" y="2039.8" font-size="23.2" text-anchor="middle" textLength="48.5" lengthAdjust="spacingAndGlyphs" fill="#161616" stroke="#161616" stroke-width=".35">0.04</text>
<text x="1792.1" y="1646.9" font-size="23.2" text-anchor="end" textLength="48.5" lengthAdjust="spacingAndGlyphs" fill="#161616" stroke="#161616" stroke-width=".35">0.04</text>
<text x="1792.1" y="1724.2" font-size="23.2" text-anchor="end" textLength="48.5" lengthAdjust="spacingAndGlyphs" fill="#161616" stroke="#161616" stroke-width=".35">0.02</text>
<text x="1792.1" y="1801.5" font-size="23.2" text-anchor="end" textLength="48.5" lengthAdjust="spacingAndGlyphs" fill="#161616" stroke="#161616" stroke-width=".35">0.00</text>
<text x="1792.1" y="1878.8" font-size="23.2" text-anchor="end" textLength="66.8" lengthAdjust="spacingAndGlyphs" fill="#161616" stroke="#161616" stroke-width=".35">−0.02</text>
<text x="1792.1" y="1956.1" font-size="23.2" text-anchor="end" textLength="66.8" lengthAdjust="spacingAndGlyphs" fill="#161616" stroke="#161616" stroke-width=".35">−0.04</text>
<text x="2476.1" y="2070.0" font-size="23.2" text-anchor="middle" textLength="294.0" lengthAdjust="spacingAndGlyphs" fill="#161616" stroke="#161616" stroke-width=".35">Elementos computacionais</text>
<text x="1713.1" y="1793.4" font-size="23.2" text-anchor="middle" textLength="185.3" lengthAdjust="spacingAndGlyphs" fill="#161616" stroke="#161616" stroke-width=".35" transform="rotate(-90 1713.1 1793.4)">Vazão Disponível</text>
<text x="2476.1" y="1565.6" font-size="27.8" text-anchor="middle" textLength="668.4" lengthAdjust="spacingAndGlyphs" fill="#161616" stroke="#161616" stroke-width=".35">Perfil de Vazão Disponível ao longo do Rio Principal</text>
<rect x="2938.4" y="1591.2" width="193.5" height="40.5" rx="4.5" fill="#fff" fill-opacity="0.8" stroke="#e0e0e0" stroke-width="2"/>
<path d="M2946.6,1609.0h46.5" stroke="#3f9fb0" stroke-width="3.6"/>
<text x="3010.9" y="1616.5" font-size="23.2" text-anchor="start" textLength="111.0" lengthAdjust="spacingAndGlyphs" fill="#161616" stroke="#161616" stroke-width=".35">Otimizado</text>
</g>
</svg>
</body></html>
